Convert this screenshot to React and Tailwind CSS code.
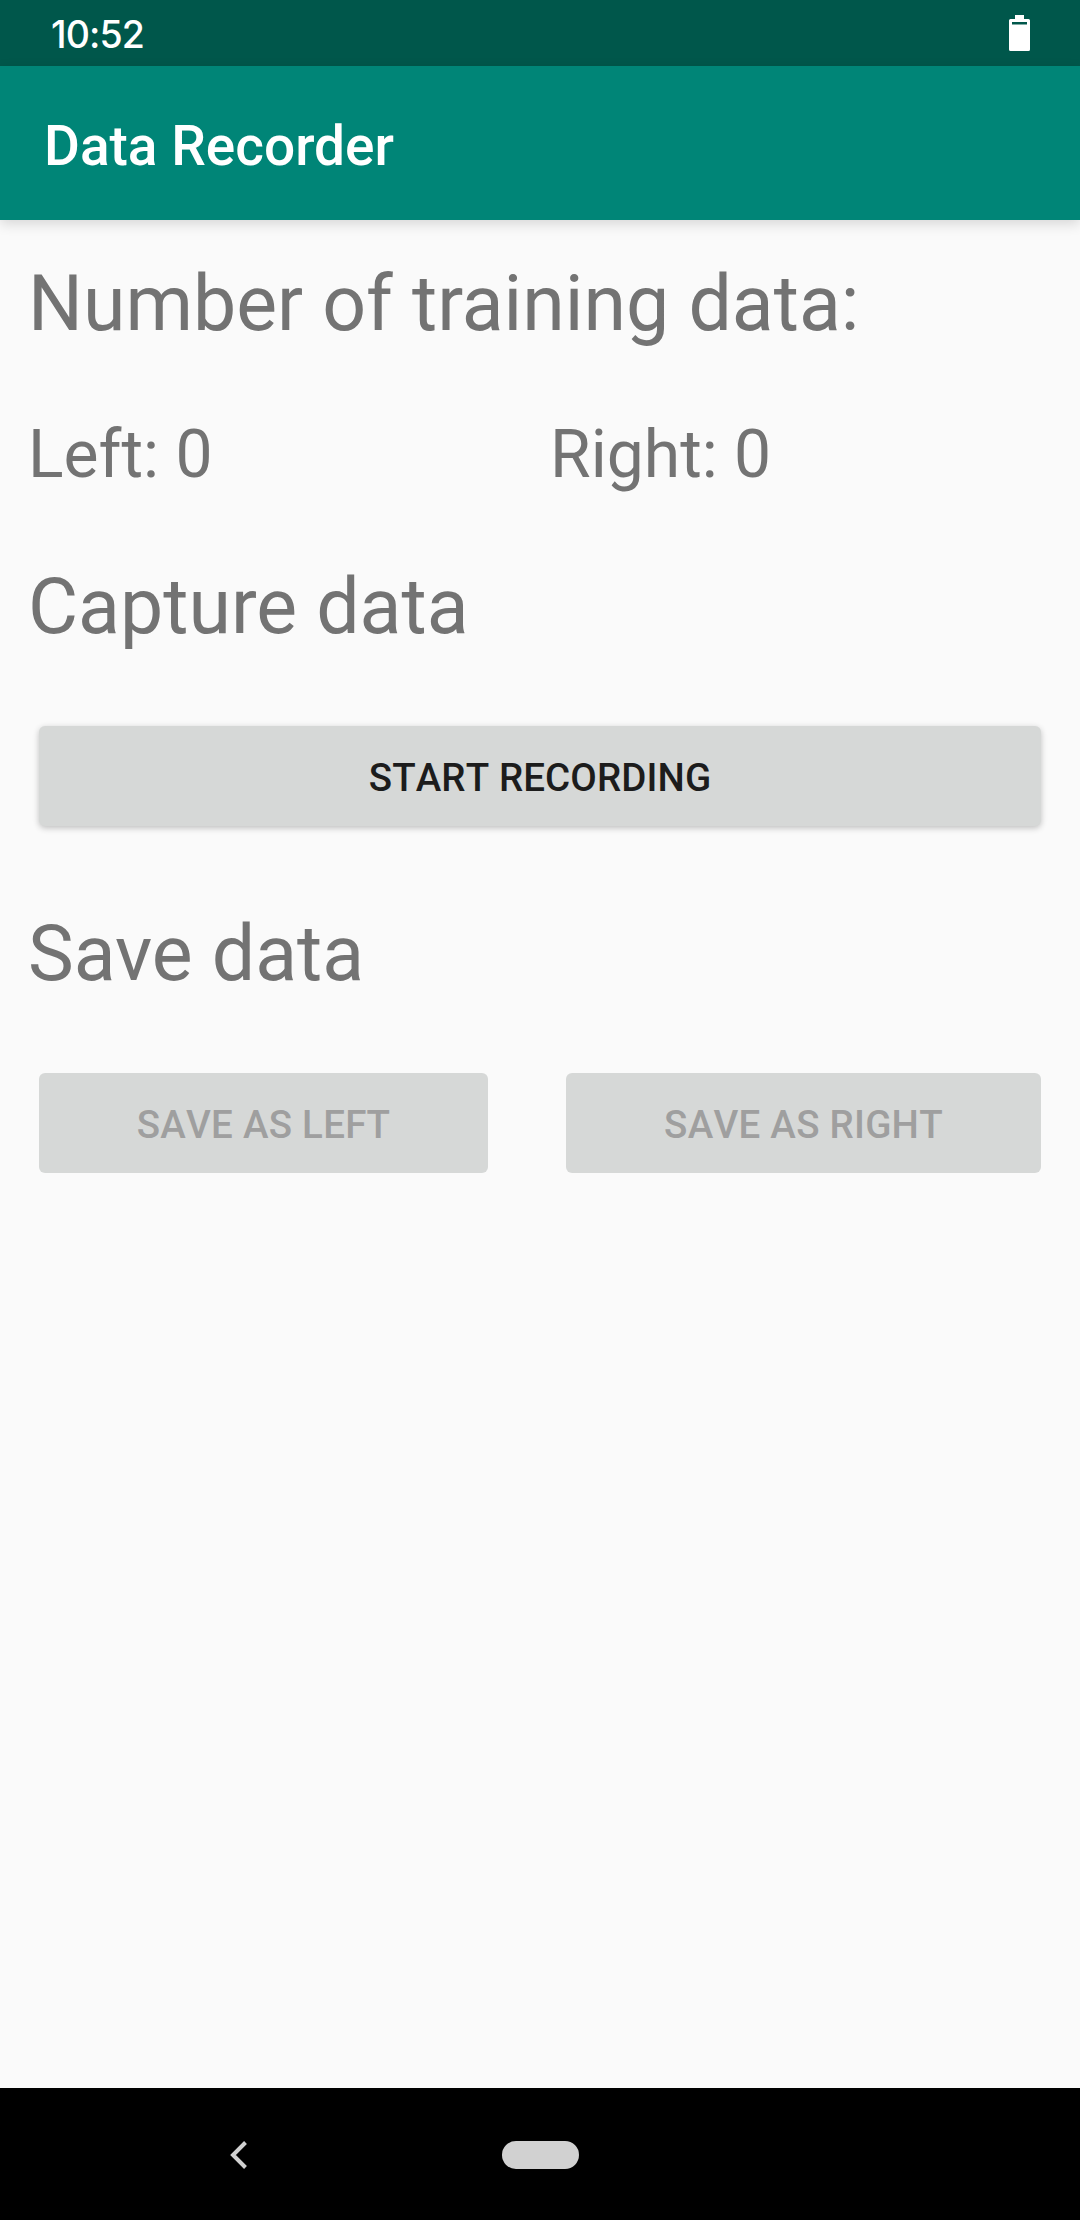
import React, { useState } from 'react';
import clsx from 'clsx';

const StatusBar = () => (
  <div className="h-[66px] shrink-0 bg-[#00574b] flex items-center justify-between pl-[51px] pr-[50px] text-white">
    <span className="font-['Inter'] font-[550] text-[37.5px] leading-[62px] tracking-[-0.9px] pt-[4px]">10:52</span>
    <svg width="21" height="36" viewBox="0 0 21 36" fill="currentColor">
      <path fillRule="evenodd" d="M6 0h9v4h4.500A1.500 1.500 0 0 1 21 5.500V34.500a1.500 1.500 0 0 1-1.500 1.500h-18A1.500 1.500 0 0 1 0 34.500V5.500A1.500 1.500 0 0 1 1.500 4H6zM3 7v2.500h15V7z" />
    </svg>
  </div>
);

const AppBar = ({ title }) => (
  <header className="h-[154px] shrink-0 bg-[#008577] px-11 flex items-center shadow-[0_4px_12px_rgba(0,0,0,0.14)]">
    <h1 className="text-white font-medium text-[55px] leading-[64px] mt-[6px]">{title}</h1>
  </header>
);

const Heading = ({ children, className }) => (
  <h2 className={clsx("text-[77px] leading-[104px] text-[#737373]", className)}>{children}</h2>
);

const Button = ({ children, className, disabled, onClick }) => (
  <button
    type="button"
    onClick={onClick}
    disabled={disabled}
    className={clsx(
      "h-[100px] pt-[2px] rounded-[6px] bg-[#d6d8d7] font-medium text-[38.5px] leading-[45px] uppercase [font-kerning:none]",
      disabled ? "text-[#9f9f9f] tracking-[0.25px]" : "text-[#1c1c1c] tracking-[0.1px] shadow-[0_2px_6px_rgba(0,0,0,0.24)]",
      className
    )}
  >
    {children}
  </button>
);

const NavBar = () => (
  <nav className="h-[132px] shrink-0 bg-black flex items-center text-[#d1d1d1]">
    <svg className="ml-[230px] mt-px" width="18" height="28" viewBox="0 0 18 28" fill="none" stroke="currentColor" strokeWidth="4">
      <path d="M15.500 1.500 3 14l12.500 12.500" />
    </svg>
    <div className="ml-[254px] mt-px w-[77px] h-[28px] rounded-full bg-[#d1d1d1]"></div>
  </nav>
);

const App = () => {
  const [isRecording, setIsRecording] = useState(false);
  const counts = { left: 0, right: 0 };

  return (
    <div className="w-[1080px] h-[2220px] flex flex-col bg-[#fafafa] font-['Roboto',sans-serif] overflow-hidden">
      <StatusBar />
      <AppBar title="Data Recorder" />

      <main className="flex-1 pt-8 px-7">
        <Heading>Number of training data:</Heading>

        <div className="mt-[55px] grid grid-cols-[522px_1fr] text-[66px] leading-[88px] text-[#737373]">
          <p>Left: {counts.left}</p>
          <p>Right: {counts.right}</p>
        </div>

        <Heading className="mt-[56px]">Capture data</Heading>
        <div className="mt-[67px] px-[11px] flex">
          <Button className="flex-1" onClick={() => setIsRecording(!isRecording)}>
            {isRecording ? 'Stop recording' : 'Start recording'}
          </Button>
        </div>

        <Heading className="mt-[76px]">Save data</Heading>
        <div className="mt-[67px] px-[11px] flex justify-between">
          <Button disabled className="w-[449px]">Save as left</Button>
          <Button disabled className="w-[475px]">Save as right</Button>
        </div>
      </main>

      <NavBar />
    </div>
  );
};

export default App;
